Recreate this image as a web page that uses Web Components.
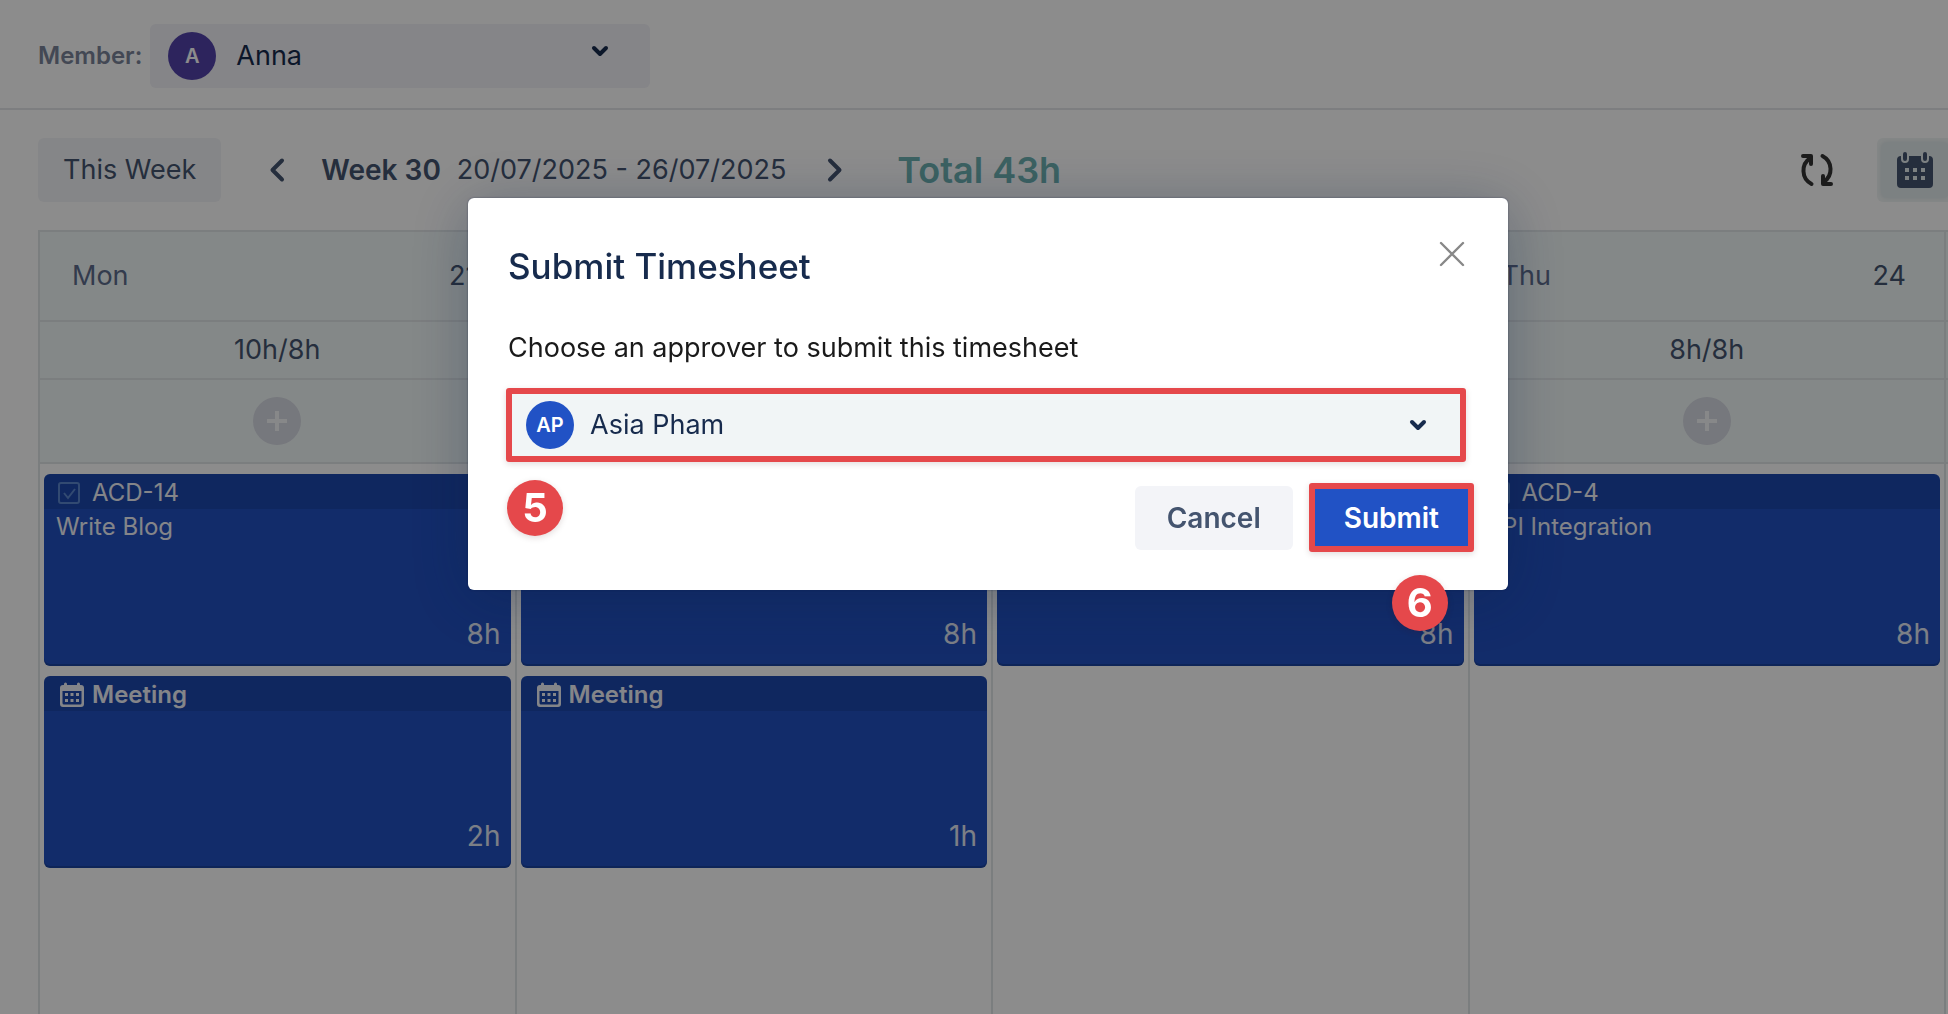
<!DOCTYPE html>
<html lang="en">
<head>
<meta charset="utf-8">
<title>Timesheet</title>
<style>
    html, body {
        margin: 0;
        padding: 0;
    }
    body {
        font-family: Inter, "Liberation Sans", sans-serif;
        font-size: 27px;
        line-height: 36px;
        color: #44546f;
        background: #fff;
        overflow: hidden;
    }
</style>
</head>
<body>
<timesheet-page></timesheet-page>
<submit-dialog></submit-dialog>

<script>
(function() {
    const ICONS = {
        down: `<svg width="18" height="12" viewBox="0 0 18 12"><path d="M3 3l6 6 6-6" fill="none" stroke="currentColor" stroke-width="4" stroke-linecap="round" stroke-linejoin="round"/></svg>`,
        left: `<svg width="16" height="24" viewBox="0 0 16 24"><path d="M13 2.500L3.500 12l9.500 9.500" fill="none" stroke="currentColor" stroke-width="4" stroke-linecap="round" stroke-linejoin="round"/></svg>`,
        right: `<svg width="16" height="24" viewBox="0 0 16 24"><path d="M3 2.500L12.500 12 3 21.500" fill="none" stroke="currentColor" stroke-width="4" stroke-linecap="round" stroke-linejoin="round"/></svg>`,
        close: `<svg width="26" height="26" viewBox="0 0 26 26"><path d="M2 1l22 22M24 1L2 23" fill="none" stroke="currentColor" stroke-width="2.400" stroke-linecap="round"/></svg>`,
        plus: `<svg width="20" height="20" viewBox="0 0 20 20"><path d="M10 0v20M0 10h20" stroke="currentColor" stroke-width="4"/></svg>`,
        refresh: `<svg width="32" height="32" viewBox="0 0 32 32" fill="none" stroke="currentColor" stroke-width="4" stroke-linecap="round" stroke-linejoin="round"><path d="M10.500 30A15 15 0 0 1 9.500 4"/><path d="M2 2h8v8"/><path d="M21.500 2a15 15 0 0 1 1 26"/><path d="M30 30h-8v-8"/></svg>`,
        calendar: `<svg width="36" height="36" viewBox="0 0 36 36"><path fill-rule="evenodd" fill="currentColor" d="M4 4h28a4 4 0 0 1 4 4v24a4 4 0 0 1-4 4H4a4 4 0 0 1-4-4V8a4 4 0 0 1 4-4zM8 16v4h4v-4zm8 0v4h4v-4zm8 0v4h4v-4zM8 24v4h4v-4zm8 0v4h4v-4zm8 0v4h4v-4z"/><path d="M8 2v5M28 2v5" stroke="#e4eced" stroke-width="8" stroke-linecap="round"/><path d="M8 2v5M28 2v5" stroke="currentColor" stroke-width="4" stroke-linecap="round"/></svg>`,
        event: `<svg width="24" height="24" viewBox="0 0 24 24" fill="currentColor"><path fill-rule="evenodd" d="M3 2h1V1a1 1 0 0 1 3 0v1h10V1a1 1 0 0 1 3 0v1h1a3 3 0 0 1 3 3v16a3 3 0 0 1-3 3H3a3 3 0 0 1-3-3V5a3 3 0 0 1 3-3zM2.500 8v12a1.500 1.500 0 0 0 1.500 1.500h16a1.500 1.500 0 0 0 1.500-1.500V8z"/><path d="M5 10h3v3H5zM10.500 10h3v3h-3zM16 10h3v3h-3zM5 16h3v3H5zM10.500 16h3v3h-3zM16 16h3v3h-3z"/></svg>`,
        task: `<svg width="22" height="22" viewBox="0 0 22 22" fill="none" stroke="currentColor" stroke-width="2"><rect x="1" y="1" width="20" height="20" rx="2"/><path d="M6 11l4 5 7-9"/></svg>`
    };

    function makeTemplate(html) {
        const template = document.createElement("template");
        template.innerHTML = html;
        return template;
    }

    class BaseElement extends HTMLElement {
        constructor(template) {
            super();
            this._shadowRoot = this.attachShadow({mode: "open"});
            this._shadowRoot.appendChild(template.content.cloneNode(true));
        }
    }

    // <ui-icon name="...">
    const iconTemplate = makeTemplate(`
        <style>
            :host {
                display: inline-flex;
                flex: none;
            }
            svg {
                display: block;
                overflow: visible;
            }
        </style>
        <span></span>
    `);

    class UiIcon extends BaseElement {
        static get observedAttributes() {
            return ["name"];
        }
        constructor() {
            super(iconTemplate);
        }
        attributeChangedCallback(attr, oldValue, newValue) {
            this._shadowRoot.querySelector("span").innerHTML = ICONS[newValue] || "";
        }
    }

    // Drop-down with an avatar in front of the chosen person
    const personTemplate = makeTemplate(`
        <style>
            :host {
                display: grid;
                grid-template-columns: 100%;
                align-items: center;
                height: 64px;
                border-radius: 6px;
                color: #172b4d;
                background: var(--field-bg, #f2f2f7);
            }
            select {
                grid-area: 1 / 1;
                width: 100%;
                height: 100%;
                margin: 0;
                padding: 0 80px 0 var(--text-start, 86px);
                border: 0;
                border-radius: 6px;
                font: inherit;
                color: inherit;
                background: none;
                appearance: none;
            }
            .avatar {
                grid-area: 1 / 1;
                width: 48px;
                height: 48px;
                margin-left: var(--avatar-start, 18px);
                border-radius: 50%;
                font-size: 20px;
                font-weight: 600;
                line-height: 48px;
                text-align: center;
                color: #fff;
                background: var(--avatar-bg, #5243aa);
                pointer-events: none;
            }
            ui-icon {
                grid-area: 1 / 1;
                justify-self: end;
                margin-right: var(--arrow-end, 41px);
                padding-bottom: var(--arrow-lift, 0);
                pointer-events: none;
            }
        </style>
        <select><option></option></select>
        <span class="avatar"></span>
        <ui-icon name="down"></ui-icon>
    `);

    class PersonSelect extends BaseElement {
        constructor() {
            super(personTemplate);
        }
        connectedCallback() {
            const select = this._shadowRoot.querySelector("select");
            select.setAttribute("aria-label", this.getAttribute("label"));
            select.options[0].textContent = this.getAttribute("person");
            this._shadowRoot.querySelector(".avatar").textContent = this.getAttribute("initials");
        }
    }

    const buttonTemplate = makeTemplate(`
        <style>
            :host {
                display: block;
            }
            button {
                display: block;
                height: var(--button-height, 64px);
                padding: 0 var(--button-padding, 25px);
                border: 0;
                border-radius: 6px;
                font: inherit;
                color: inherit;
                background: #f3f4f8;
                cursor: pointer;
            }
            .face {
                display: flex;
                align-items: center;
                justify-content: center;
            }
            :host([kind="primary"]) button {
                border-radius: 0;
                color: #fff;
                background: #2152c5;
            }
            :host([kind="bare"]) button {
                padding: 0;
                background: none;
            }
            :host([kind="toggle"]) button {
                width: 76px;
                padding: 4px;
                background: #f0f5f5;
            }
            :host([kind="toggle"]) .face {
                height: 56px;
                border-radius: 6px;
                background: #e2eced;
                box-shadow: 0 0 4px #d9e2e4;
            }
        </style>
        <button type="button"><span class="face"><slot></slot></span></button>
    `);

    class UiButton extends BaseElement {
        constructor() {
            super(buttonTemplate);
        }
        connectedCallback() {
            if (this.hasAttribute("label")) {
                this._shadowRoot.querySelector("button").setAttribute("aria-label", this.getAttribute("label"));
            }
        }
    }

    const memberTemplate = makeTemplate(`
        <style>
            :host {
                display: flex;
                align-items: center;
                gap: 8px;
                padding: 24px 38px 20px;
                border-bottom: 2px solid #e4e5ea;
            }
            .label {
                font-size: 24px;
                font-weight: 600;
                color: #7a8499;
            }
            person-select {
                width: 500px;
                --arrow-lift: 10px;
            }
        </style>
        <span class="label">Member:</span>
        <person-select label="Member" person="Anna" initials="A"></person-select>
    `);

    class MemberBar extends BaseElement {
        constructor() {
            super(memberTemplate);
        }
    }

    const toolbarTemplate = makeTemplate(`
        <style>
            :host {
                display: flex;
                align-items: center;
                padding: 28px 0 28px 38px;
                margin-right: -5px;
            }
            .week {
                display: flex;
                align-items: center;
                gap: 36px;
                margin: 0 54px 0 48px;
            }
            .range {
                display: flex;
                gap: 16px;
                min-width: 470px;
            }
            b {
                font-size: 28px;
                font-weight: 600;
            }
            .total {
                font-size: 36px;
                font-weight: 600;
                color: #6db2b2;
            }
            .tools {
                display: flex;
                align-items: center;
                gap: 44px;
                margin-left: auto;
            }
            .refresh {
                color: #333;
            }
        </style>
        <ui-button>This Week</ui-button>
        <div class="week">
            <ui-button kind="bare" label="Previous week"><ui-icon name="left"></ui-icon></ui-button>
            <div class="range"><b>Week 30</b><span>20/07/2025 - 26/07/2025</span></div>
            <ui-button kind="bare" label="Next week"><ui-icon name="right"></ui-icon></ui-button>
        </div>
        <span class="total">Total 43h</span>
        <div class="tools">
            <ui-button class="refresh" kind="bare" label="Refresh"><ui-icon name="refresh"></ui-icon></ui-button>
            <ui-button kind="toggle" label="Calendar view"><ui-icon name="calendar"></ui-icon></ui-button>
        </div>
    `);

    class WeekToolbar extends BaseElement {
        constructor() {
            super(toolbarTemplate);
        }
    }

    // One logged item: the header comes from the slot named "head"
    const cardTemplate = makeTemplate(`
        <style>
            :host {
                display: flex;
                flex-direction: column;
                height: 192px;
                border-radius: 6px;
                overflow: hidden;
                font-size: 24px;
                color: #f0f3f9;
                background: #2150c1;
                box-shadow: inset 0 -2px 0 rgba(9, 30, 66, 0.25);
            }
            .head {
                display: flex;
                align-items: center;
                box-sizing: border-box;
                height: 35px;
                padding: 2px 14px 0;
                line-height: 32px;
                background: rgba(0, 0, 0, 0.1);
            }
            :host([type="task"]) .head {
                gap: 12px;
            }
            :host([type="event"]) .head {
                gap: 8px;
                padding-left: 16px;
                font-weight: 600;
            }
            :host([type="task"]) ui-icon {
                color: #5c88cf;
            }
            .title {
                flex: 1;
                padding: 0 12px;
                line-height: 36px;
            }
            .hours {
                padding: 0 10px 14px;
                font-size: 28px;
                text-align: right;
                color: #e2e8f4;
            }
        </style>
        <div class="head"><ui-icon></ui-icon><slot name="head"></slot></div>
        <div class="title"><slot></slot></div>
        <div class="hours"></div>
    `);

    class WorkCard extends BaseElement {
        constructor() {
            super(cardTemplate);
        }
        connectedCallback() {
            this._shadowRoot.querySelector("ui-icon").setAttribute("name", this.getAttribute("type"));
            this._shadowRoot.querySelector(".hours").textContent = this.getAttribute("hours");
        }
    }

    const gridTemplate = makeTemplate(`
        <style>
            :host {
                display: block;
                padding-left: 38px;
            }
            table {
                width: 100%;
                height: 100%;
                table-layout: fixed;
                border-collapse: separate;
                border-spacing: 0;
                border-top: 2px solid #e1e6e8;
                border-left: 2px solid #e1e6e8;
                box-sizing: border-box;
            }
            .next {
                width: 2px;
            }
            th, td {
                box-sizing: border-box;
                padding: 0;
                font-weight: 400;
                border-right: 2px solid #e1e6e8;
            }
            th:last-child, td:last-child {
                border-right: 0;
            }
            thead th, thead td {
                text-align: center;
                border-bottom: 2px solid #e1e6e8;
                background: #f1f8f8;
            }
            thead th { height: 90px; }
            .sums td { height: 58px; }
            .adds td { height: 84px; }
            .day {
                display: flex;
                justify-content: space-between;
                padding: 0 38px 0 32px;
            }
            .day span:first-child {
                color: #5e6c8c;
            }
            .add {
                display: inline-flex;
                align-items: center;
                justify-content: center;
                width: 48px;
                height: 48px;
                padding: 0;
                border: 0;
                border-radius: 50%;
                vertical-align: middle;
                color: #f6f7fa;
                background: #d7dae3;
            }
            tbody td {
                vertical-align: top;
            }
            .cards {
                display: grid;
                gap: 10px;
                padding: 10px 4px;
            }
        </style>
        <table>
            <colgroup><col><col><col><col><col class="next"></colgroup>
            <thead>
                <tr>
                    <th><div class="day"><span>Mon</span><span>21</span></div></th>
                    <th></th>
                    <th></th>
                    <th><div class="day"><span>Thu</span><span>24</span></div></th>
                    <th></th>
                </tr>
                <tr class="sums">
                    <td>10h/8h</td>
                    <td></td>
                    <td></td>
                    <td>8h/8h</td>
                    <td></td>
                </tr>
                <tr class="adds">
                    <td><button class="add" type="button" aria-label="Log time on Monday"><ui-icon name="plus"></ui-icon></button></td>
                    <td></td>
                    <td></td>
                    <td><button class="add" type="button" aria-label="Log time on Thursday"><ui-icon name="plus"></ui-icon></button></td>
                    <td></td>
                </tr>
            </thead>
            <tbody>
                <tr>
                    <td><div class="cards">
                        <work-card type="task" hours="8h"><span slot="head">ACD-14</span>Write Blog</work-card>
                        <work-card type="event" hours="2h"><span slot="head">Meeting</span></work-card>
                    </div></td>
                    <td><div class="cards">
                        <work-card type="task" hours="8h"></work-card>
                        <work-card type="event" hours="1h"><span slot="head">Meeting</span></work-card>
                    </div></td>
                    <td><div class="cards">
                        <work-card type="task" hours="8h"></work-card>
                    </div></td>
                    <td><div class="cards">
                        <work-card type="task" hours="8h"><span slot="head">ACD-4</span>API Integration</work-card>
                    </div></td>
                    <td></td>
                </tr>
            </tbody>
        </table>
    `);

    class WeekGrid extends BaseElement {
        constructor() {
            super(gridTemplate);
        }
    }

    const pageTemplate = makeTemplate(`
        <style>
            :host {
                display: flex;
                flex-direction: column;
                height: 100vh;
                overflow: hidden;
            }
            week-grid {
                flex: 1;
            }
        </style>
        <member-bar></member-bar>
        <week-toolbar></week-toolbar>
        <week-grid></week-grid>
    `);

    class TimesheetPage extends BaseElement {
        constructor() {
            super(pageTemplate);
        }
    }

    // Red frame round a control, with the number of the step beside it
    const calloutTemplate = makeTemplate(`
        <style>
            :host {
                display: block;
                position: relative;
                border: 6px solid #e5484b;
                border-radius: 3px;
                box-shadow: 0 2px 6px rgba(60, 20, 20, 0.15);
            }
            .step {
                position: absolute;
                top: 86px;
                left: var(--step-left);
                z-index: 1;
                width: 56px;
                height: 56px;
                border-radius: 50%;
                font-size: 40px;
                font-weight: 700;
                line-height: 56px;
                text-align: center;
                color: #fff;
                background: #e5484b;
                box-shadow: 0 2px 6px rgba(60, 20, 20, 0.15);
            }
        </style>
        <slot></slot>
        <span class="step"></span>
    `);

    class StepCallout extends BaseElement {
        constructor() {
            super(calloutTemplate);
        }
        connectedCallback() {
            this._shadowRoot.querySelector(".step").textContent = this.getAttribute("step");
        }
    }

    const dialogTemplate = makeTemplate(`
        <style>
            :host {
                display: flex;
                justify-content: center;
                align-items: flex-start;
                position: fixed;
                inset: 0;
                padding: 198px 0 0 28px;
                background: rgba(0, 0, 0, 0.45);
            }
            section {
                display: flex;
                flex-direction: column;
                box-sizing: border-box;
                width: 1040px;
                padding: 44px 40px 38px;
                border-radius: 6px;
                color: #1a1a1a;
                background: #fff;
                box-shadow: 0 0 2px rgba(9, 30, 66, 0.5), 0 8px 60px rgba(9, 30, 66, 0.3);
            }
            header {
                display: flex;
                align-items: flex-start;
                justify-content: space-between;
            }
            h2 {
                margin: 0;
                font-size: 35px;
                font-weight: 500;
                line-height: 48px;
                color: #172b4d;
            }
            .close {
                padding-right: 3px;
                color: #888;
                --button-height: 26px;
            }
            p {
                margin: 40px 0 22px;
            }
            .field {
                margin: 0 2px 0 -2px;
                --step-left: -5px;
            }
            person-select {
                height: 62px;
                border-radius: 0;
                --field-bg: #f1f5f6;
                --avatar-bg: #2152c5;
                --avatar-start: 14px;
                --text-start: 78px;
                --arrow-end: 33px;
            }
            footer {
                display: flex;
                align-items: center;
                justify-content: flex-end;
                gap: 16px;
                margin: 21px -6px 0 0;
                font-size: 28px;
                font-weight: 600;
                color: #44546f;
            }
            footer ui-button {
                --button-padding: 32px;
            }
            .submit {
                --step-left: 77px;
            }
            .submit ui-button {
                --button-height: 57px;
                --button-padding: 29px;
            }
        </style>
        <section role="dialog" aria-modal="true" aria-labelledby="title">
            <header>
                <h2 id="title">Submit Timesheet</h2>
                <ui-button class="close" kind="bare" label="Close"><ui-icon name="close"></ui-icon></ui-button>
            </header>
            <p>Choose an approver to submit this timesheet</p>
            <step-callout class="field" step="5">
                <person-select label="Approver" person="Asia Pham" initials="AP"></person-select>
            </step-callout>
            <footer>
                <ui-button>Cancel</ui-button>
                <step-callout class="submit" step="6"><ui-button kind="primary">Submit</ui-button></step-callout>
            </footer>
        </section>
    `);

    class SubmitDialog extends BaseElement {
        constructor() {
            super(dialogTemplate);
        }
    }

    customElements.define("ui-icon", UiIcon);
    customElements.define("ui-button", UiButton);
    customElements.define("person-select", PersonSelect);
    customElements.define("member-bar", MemberBar);
    customElements.define("week-toolbar", WeekToolbar);
    customElements.define("work-card", WorkCard);
    customElements.define("week-grid", WeekGrid);
    customElements.define("timesheet-page", TimesheetPage);
    customElements.define("step-callout", StepCallout);
    customElements.define("submit-dialog", SubmitDialog);
})();
</script>
</body>
</html>
